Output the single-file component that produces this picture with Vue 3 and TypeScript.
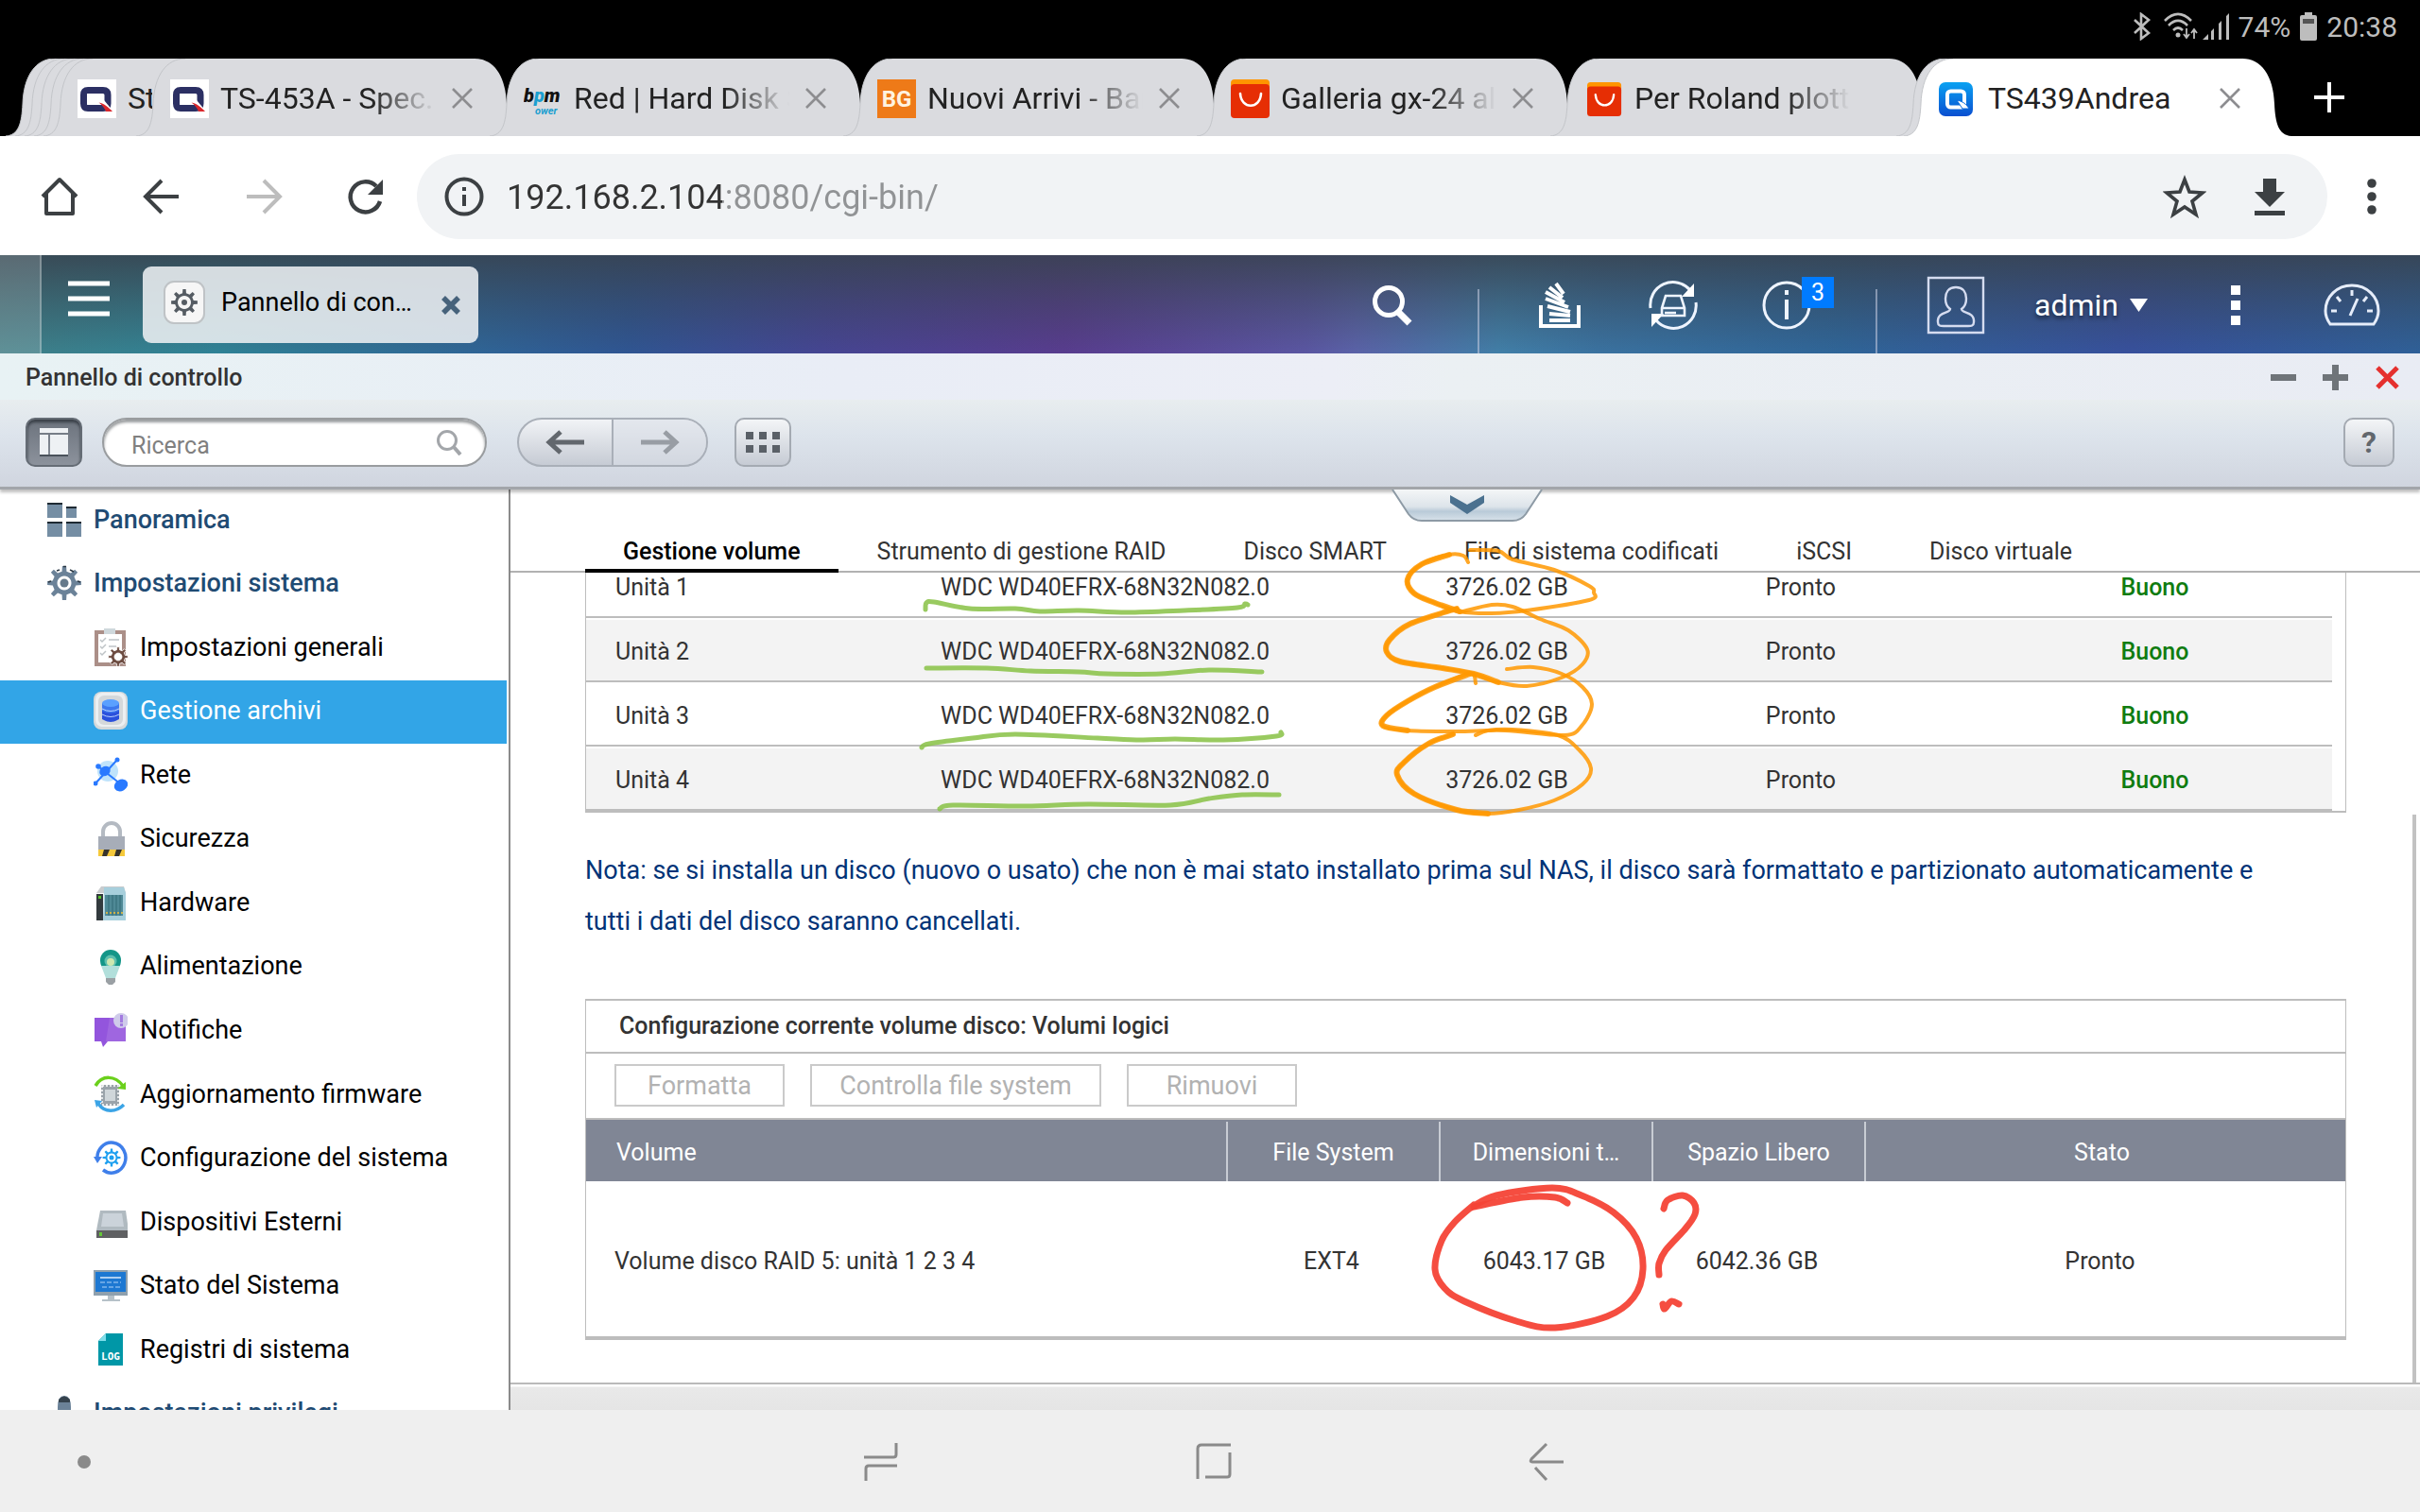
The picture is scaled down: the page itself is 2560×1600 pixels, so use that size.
<script setup lang="ts">
type Point = [number, number]

interface BrowserTab {
  title: string
  icon: string
  kind: 'stack' | 'peek' | 'full' | 'sliver'
  active?: boolean
  closable?: boolean
}

interface MenuItem {
  label: string
  icon: string
  level: 1 | 2
  selected?: boolean
}

/* Outline of a cog wheel with evenly spaced teeth. */
function gear(cx: number, cy: number, outer: number, inner: number, teeth: number): string {
  const step = (Math.PI * 2) / teeth
  const at = (r: number, a: number) =>
    `${(cx + r * Math.sin(a)).toFixed(2)} ${(cy - r * Math.cos(a)).toFixed(2)}`
  const parts: string[] = []
  for (let i = 0; i < teeth; i++) {
    const a = i * step
    parts.push(
      at(inner, a - step * 0.25),
      at(outer, a - step * 0.15),
      at(outer, a + step * 0.15),
      at(inner, a + step * 0.25),
    )
  }
  return `M${parts.join('L')}Z`
}

/* Smooth freehand line through the given points. */
function stroke(points: Point[]): string {
  let d = `M${points[0][0]} ${points[0][1]}`
  for (let i = 0; i < points.length - 1; i++) {
    const p0 = points[Math.max(0, i - 1)]
    const p1 = points[i]
    const p2 = points[i + 1]
    const p3 = points[Math.min(points.length - 1, i + 2)]
    const c1 = [p1[0] + (p2[0] - p0[0]) / 6, p1[1] + (p2[1] - p0[1]) / 6]
    const c2 = [p2[0] - (p3[0] - p1[0]) / 6, p2[1] - (p3[1] - p1[1]) / 6]
    d += `C${c1[0].toFixed(1)} ${c1[1].toFixed(1)} ${c2[0].toFixed(1)} ${c2[1].toFixed(1)} ${p2[0]} ${p2[1]}`
  }
  return d
}

const qnap =
  '<path fill="#fff" d="M0 0h41v41H0z"/><path fill="none" stroke="#2b2f63" stroke-width="7" d="M11 11.500h16q5 0 5 5v9q0 5-5 5H11q-4.500 0-4.500-5v-9q0-5 4.500-5z"/><path fill="#fff" d="M22 22l6 0 10 12-3 0z"/><path fill="#d9262c" d="M22.500 24.500c6 1 10 5 14.500 9.500h-7c-1-3-4-7-7.500-9.500z"/>'
const ali =
  '<path fill="#ff9500" d="M4 0h33q4 0 4 4v10H0V4q0-4 4-4z"/><path fill="#e62e04" d="M4 5h33q4 0 4 4v28q0 4-4 4H4q-4 0-4-4V9q0-4 4-4z"/><path fill="none" stroke="#fff" stroke-width="2.600" stroke-linecap="round" d="M10 15c1 17 21 17 22 0"/>'
const favicons: Record<string, string> = {
  qnap,
  ali,
  aliSmall: `<g transform="translate(3 3) scale(.88)">${ali}</g>`,
  bpm: '<text x="0" y="24" font-family="Roboto, sans-serif" font-size="20" font-weight="900" font-style="italic" fill="#111">b<tspan fill="#1b9fd0">p</tspan>m</text><text x="12" y="37" font-family="Roboto, sans-serif" font-size="11" font-weight="700" font-style="italic" fill="#1b9fd0">ower</text>',
  bg: '<path fill="#ee7a18" d="M0 0h41v41H0z"/><text x="20.500" y="29" text-anchor="middle" font-family="Roboto, sans-serif" font-size="24" font-weight="700" fill="#fff3e0">BG</text>',
  qts: '<defs><linearGradient id="qts" x2="0" y2="1"><stop stop-color="#0aa2f2"/><stop offset="1" stop-color="#0a4fd0"/></linearGradient></defs><rect x="1" y="3" width="36" height="36" rx="7" fill="url(#qts)"/><rect x="10" y="12.500" width="18" height="17" rx="3.500" fill="none" stroke="#fff" stroke-width="4"/><path fill="#fff" stroke="#0b6bdc" d="M20 22c6 1 10 4 13 9h-7z"/>',
}

const browserTabs: BrowserTab[] = [
  { title: '', icon: '', kind: 'stack' },
  { title: '', icon: '', kind: 'stack' },
  { title: '', icon: '', kind: 'stack' },
  { title: '', icon: '', kind: 'stack' },
  { title: 'St', icon: 'qnap', kind: 'peek' },
  { title: 'TS-453A - Spec.', icon: 'qnap', kind: 'full', closable: true },
  { title: 'Red | Hard Disk S', icon: 'bpm', kind: 'full', closable: true },
  { title: 'Nuovi Arrivi - Ban', icon: 'bg', kind: 'full', closable: true },
  { title: 'Galleria gx-24 all', icon: 'ali', kind: 'full', closable: true },
  { title: 'Per Roland plotter', icon: 'aliSmall', kind: 'full' },
  { title: '', icon: '', kind: 'sliver' },
  { title: 'TS439Andrea', icon: 'qts', kind: 'full', active: true, closable: true },
]

const menuIcons: Record<string, string> = {
  overview:
    '<path fill="#758ea4" d="M0 2h16v16H0zM20 6h11v12H20zM0 22h16v16H0zM20 22h16v16H20z"/><path fill="#1e2a33" d="M0 2h16v2H0zM20 6h11v2H20zM0 22h16v2H0zM20 22h16v2H20z"/>',
  system: `<path fill="#6b8298" fill-rule="evenodd" d="${gear(18, 20, 18, 12.5, 8)}M18 12.500a7.500 7.500 0 1 0 .01 0z"/><path fill="none" stroke="#2a3742" stroke-width="1.500" d="M10 7l3-1M17 2.500h3M24 6l4 2M1 19l3-1M32 18l3 1"/><circle cx="18" cy="20" r="4.500" fill="#65798a"/>`,
  general: `<path fill="#ab8f88" d="M1 2h33v38H1z"/><path fill="#fff" d="M5 6h25v30H5z"/><path fill="#cfd8dc" d="M11 0h12v6H11z"/><path fill="none" stroke="#bfc4c7" stroke-width="1.500" d="M7 12l2 2 4-4M7 19l2 2 4-4M7 26l2 2 4-4M16 12h11M16 19h8"/><path fill="#6d4c41" stroke="#fff" stroke-width=".8" fill-rule="evenodd" d="${gear(26, 30, 10.5, 7.5, 8)}M26 26a4 4 0 1 0 .01 0z"/>`,
  storage:
    '<rect width="36" height="40" rx="8" fill="#d5d9db"/><rect x="2" y="1" width="32" height="36" rx="7" fill="#eceff1"/><rect x="5" y="4" width="26" height="31" rx="6" fill="#d4d8da"/><path fill="#2b50dc" d="M9 12h18v17q-9 6-18 0z"/><path fill="#3d78ee" d="M9 12h18v8q-9 5-18 0z"/><ellipse cx="18" cy="12" rx="9" ry="4" fill="#5aa0ff"/><path fill="none" stroke="#b9d0ff" d="M9 18q9 5 18 0M9 24q9 5 18 0"/>',
  network:
    '<circle cx="15" cy="16" r="11" fill="#bfe3fb"/><path fill="none" stroke="#2979ff" stroke-width="2" d="M1 30L25 4M5 11l24 19"/><ellipse cx="12" cy="16" rx="6" ry="5" transform="rotate(-35 12 16)" fill="#2979ff"/><circle cx="25" cy="4" r="2.500" fill="#2979ff"/><circle cx="5" cy="11" r="2.800" fill="#2979ff"/><circle cx="2" cy="29" r="2.500" fill="#2979ff"/><ellipse cx="29" cy="31" rx="7.500" ry="6" transform="rotate(-30 29 31)" fill="#2979ff"/>',
  security:
    '<path fill="none" stroke="#b4bac2" stroke-width="4" d="M10 20v-7a9 9 0 0 1 18 0v7"/><path fill="#a7adb8" d="M5 18h28v15H5z"/><path fill="#f5c93b" d="M5 32h28v7H5z"/><path fill="#37332b" d="M11 32h6l-3 7H9zM24 32h6l-3 7h-5z"/>',
  hardware:
    '<path fill="#c9ccce" d="M3 10l5-7h24l2 7z"/><path fill="#a7cfdc" d="M11 4h21l2 6v29H10z"/><path fill="#333a3e" d="M3 11h7v28H3z"/><path fill="#4f8996" d="M12 12h19v22H12z"/><path stroke="#336b77" d="M16 12v22M20 12v22M24 12v22M28 12v22"/><path stroke="#cdb24b" stroke-width="2" stroke-dasharray="2 2" d="M13 31h18"/><path fill="#57c12c" d="M5 13h3v3H5z"/>',
  power:
    '<path fill="#149688" d="M7 14a11 11 0 0 1 22 0q0 5-2 7H9q-2-2-2-7z"/><circle cx="18" cy="15" r="6.500" fill="#5fbfae"/><circle cx="18" cy="16" r="4" fill="#cde8b0"/><path fill="#b2dfdb" d="M8 20h20l-5 13H13z"/><path fill="#9aa0a4" d="M13 33h10v4l-3 3h-4l-3-3z"/>',
  notify:
    '<path fill="#9355dd" d="M1 7h33v25H15l-5 6-2-6H1z"/><path fill="#9f66e0" d="M17 7h17v25H13z"/><circle cx="29" cy="10" r="8" fill="#cfcbea"/><path fill="#a27ae0" d="M28 4h3v8h-3zM28 13h3v3h-3z"/>',
  firmware:
    '<path fill="#9aa3aa" d="M8 10h19v22H8z"/><path fill="none" stroke="#fff" stroke-width="1.500" stroke-dasharray="2 2" d="M9 11h17v20H9z"/><path fill="#cfd6da" d="M12 15h11v12H12z"/><path fill="none" stroke="#6bd01c" stroke-width="3.500" d="M2 11C9-1 23 0 31 11"/><path fill="#6bd01c" d="M34 7v8l-9-1z"/><path fill="none" stroke="#3ba4e6" stroke-width="3.500" d="M5 30c7 10 19 9 27 1"/><path fill="#3ba4e6" d="M1 26l8 1-6 7z"/>',
  config: `<path fill="none" stroke="#3f7fea" stroke-width="3.500" d="M4 22A15 16 0 1 1 10 33"/><path fill="#3f7fea" d="M0 19h9l-5 7z"/><path fill="#1ea0f0" fill-rule="evenodd" d="${gear(19, 20, 9.5, 6.5, 8)}M19 15.500a4.500 4.500 0 1 0 .01 0z"/><circle cx="19" cy="20" r="2.500" fill="#1ea0f0"/>`,
  devices:
    '<path fill="#b0bac0" d="M7 8h27l3 21H3z"/><path fill="#cbd3da" d="M10 11h20l2 14H8z"/><path fill="#5f6062" d="M3 29h34v8H3z"/><path fill="#65c638" d="M6 31h3v4H6z"/>',
  status:
    '<path fill="#8fa0ad" d="M0 4h36v27H0z"/><path fill="#1d78d2" d="M2 6h32v21H2z"/><path stroke="#dcecfb" stroke-width="1.500" d="M7 12h22"/><path stroke="#7fb4ec" stroke-width="1.500" d="M7 17h22M9 22h19" stroke-dasharray="5 2"/><path fill="#b6c1c8" d="M15 31h7v4h6v2H9v-2h6z"/>',
  log: '<path fill="#0097a7" d="M13 3h18v34H5V11z"/><path fill="#80deea" d="M13 3v8H5z"/><text x="18" y="31" text-anchor="middle" font-family="DejaVu Sans Mono, monospace" font-weight="700" font-size="11" fill="#fff">LOG</text>',
  privilege:
    '<path fill="#6b8298" d="M11 14q0-12 7-12t7 12v12H11z"/><path fill="#35424d" d="M12 6q6-7 12 0v3H12z"/>',
}

const menu: MenuItem[] = [
  { label: 'Panoramica', icon: 'overview', level: 1 },
  { label: 'Impostazioni sistema', icon: 'system', level: 1 },
  { label: 'Impostazioni generali', icon: 'general', level: 2 },
  { label: 'Gestione archivi', icon: 'storage', level: 2, selected: true },
  { label: 'Rete', icon: 'network', level: 2 },
  { label: 'Sicurezza', icon: 'security', level: 2 },
  { label: 'Hardware', icon: 'hardware', level: 2 },
  { label: 'Alimentazione', icon: 'power', level: 2 },
  { label: 'Notifiche', icon: 'notify', level: 2 },
  { label: 'Aggiornamento firmware', icon: 'firmware', level: 2 },
  { label: 'Configurazione del sistema', icon: 'config', level: 2 },
  { label: 'Dispositivi Esterni', icon: 'devices', level: 2 },
  { label: 'Stato del Sistema', icon: 'status', level: 2 },
  { label: 'Registri di sistema', icon: 'log', level: 2 },
  { label: 'Impostazioni privilegi', icon: 'privilege', level: 1 },
]

const sections = [
  'Gestione volume',
  'Strumento di gestione RAID',
  'Disco SMART',
  'File di sistema codificati',
  'iSCSI',
  'Disco virtuale',
]

const disks = [1, 2, 3, 4].map((n) => ({
  name: `Unità ${n}`,
  model: 'WDC WD40EFRX-68N32N082.0',
  size: '3726.02 GB',
  state: 'Pronto',
  health: 'Buono',
}))

const green: Point[][] = [
  [[979, 645], [980, 638], [988, 637], [1026, 644], [1074, 644], [1100, 647], [1141, 646], [1192, 648], [1253, 646], [1309, 643], [1317, 639], [1320, 640]],
  [[980, 707], [1044, 707], [1090, 710], [1141, 711], [1171, 713], [1228, 713], [1279, 709], [1335, 711]],
  [[975, 791], [983, 787], [1029, 781], [1074, 777], [1161, 781], [1207, 783], [1243, 782], [1294, 783], [1350, 779], [1355, 775]],
  [[994, 856], [1008, 852], [1085, 853], [1151, 851], [1238, 852], [1279, 845], [1314, 841], [1353, 841]],
]

const orange: Point[][] = [
  [[1553, 595], [1548, 588], [1533, 587], [1504, 597], [1489, 613], [1496, 628], [1518, 638], [1544, 647], [1578, 649], [1615, 646], [1681, 635], [1686, 627], [1681, 620], [1644, 603], [1600, 592], [1585, 583], [1555, 582]],
  [[1544, 648], [1578, 640], [1600, 642], [1629, 655], [1659, 667], [1679, 687], [1674, 703], [1652, 717], [1615, 726], [1585, 722], [1559, 713], [1526, 707], [1481, 700], [1467, 690], [1470, 677], [1492, 660], [1541, 644]],
  [[1594, 708], [1622, 706], [1652, 713], [1674, 727], [1684, 745], [1674, 767], [1655, 778], [1592, 773], [1541, 774], [1489, 773], [1463, 768], [1467, 757], [1489, 742], [1518, 727], [1555, 713], [1561, 723]],
  [[1561, 778], [1574, 773], [1600, 772], [1648, 778], [1670, 793], [1683, 813], [1674, 830], [1644, 847], [1607, 857], [1574, 861], [1541, 857], [1496, 840], [1478, 820], [1485, 807], [1511, 787], [1537, 777]],
]

/* The left half of each orange loop, where the pen was pressed harder. */
const orangeHeavy: Point[][] = [
  orange[0].slice(2, 8),
  orange[1].slice(9),
  orange[2].slice(9, 15),
  orange[3].slice(9),
]

const red: Point[][] = [
  [[1658, 1273], [1645, 1267], [1611, 1267], [1559, 1277]],
  [[1556, 1278], [1583, 1265], [1642, 1257], [1673, 1265], [1707, 1283], [1731, 1310], [1738, 1343], [1728, 1373], [1700, 1393], [1645, 1405], [1604, 1398], [1549, 1377], [1528, 1363], [1518, 1343], [1525, 1313], [1539, 1293], [1559, 1275]],
  [[1760, 1279], [1764, 1270], [1780, 1265], [1792, 1273], [1793, 1285], [1783, 1300], [1762, 1323], [1755, 1337], [1755, 1349]],
  [[1759, 1380], [1761, 1385], [1768, 1377], [1776, 1380]],
]
</script>

<template>
  <div class="screen">
    <div class="status">
      <svg width="20" height="30" viewBox="0 0 20 30" fill="none" stroke="#bdbdbd" stroke-width="2.6"><path d="M2 8l15 14-8 6V2l8 6L2 22" /></svg>
      <svg class="wifi" width="38" height="30" viewBox="0 0 38 30" fill="none" stroke="#bdbdbd" stroke-width="2.6">
        <path d="M2 9Q16-5 30 9M6 14q10-10 20 0M11 19q5-5 10 0" /><circle cx="16" cy="24" r="2.500" fill="#bdbdbd" stroke="none" />
        <path stroke-width="1.8" d="M25 17v9M22 23l3 4 3-4M33 28v-9M30 22l3-4 3 4" />
      </svg>
      <svg class="signal" width="30" height="30" viewBox="0 0 30 30" fill="#bdbdbd"><path d="M0 29l6-6v6zM9 20l3-3v12H9zM17 12l3-3v20h-3zM25 4l3-3v28h-3z" /></svg>
      <span>74%</span>
      <svg class="battery" width="18" height="30" viewBox="0 0 18 30"><path fill="#bdbdbd" d="M5 0h8v3h3q2 0 2 2v23q0 2-2 2H2q-2 0-2-2V5q0-2 2-2h3z" /><path fill="#555" d="M3 7h12v5H3z" /></svg>
      <span>20:38</span>
    </div>

    <nav class="tabs" aria-label="Schede">
      <div v-for="(tab, i) in browserTabs" :key="i" class="tab" :class="[tab.kind, { active: tab.active }]">
        <svg class="shape" width="410" height="82" viewBox="0 0 410 82">
          <path class="fill" d="M0 82C14 81 17 68 18 48C19 18 32 0 52 0H358C378 0 391 18 392 48C393 68 396 81 410 82Z" />
          <path class="edge" d="M0 82C14 81 17 68 18 48C19 18 32 0 52 0" />
        </svg>
        <template v-if="tab.icon">
          <svg class="favicon" width="41" height="41" viewBox="0 0 41 41" v-html="favicons[tab.icon]"></svg>
          <a class="tab-title" href="#">{{ tab.title }}</a>
          <button v-if="tab.closable" class="tab-close" aria-label="Chiudi scheda">
            <svg width="24" height="24" viewBox="0 0 24 24"><path d="M2 2l20 20M22 2L2 22" stroke="#8d8d90" stroke-width="2.6" /></svg>
          </button>
        </template>
      </div>
      <button class="new-tab" aria-label="Nuova scheda">
        <svg width="32" height="32" viewBox="0 0 32 32"><path d="M16 0v32M0 16h32" stroke="#fff" stroke-width="4" /></svg>
      </button>
    </nav>

    <div class="browser-bar">
      <button aria-label="Home"><svg width="44" height="44" viewBox="0 0 44 44"><path d="M4 22L22 4l18 18M8 19v21h28V19" fill="none" stroke="#3c4043" stroke-width="4" stroke-linejoin="round" /></svg></button>
      <button aria-label="Indietro"><svg width="44" height="44" viewBox="0 0 44 44"><path d="M22 5L5 22l17 17M5 22h35" fill="none" stroke="#3c4043" stroke-width="4" /></svg></button>
      <button aria-label="Avanti"><svg width="44" height="44" viewBox="0 0 44 44"><path d="M22 5l17 17-17 17M39 22H4" fill="none" stroke="#bdbdbd" stroke-width="4" /></svg></button>
      <button aria-label="Ricarica"><svg width="44" height="44" viewBox="0 0 44 44"><path d="M37 27A16 16 0 1 1 33 11" fill="none" stroke="#3c4043" stroke-width="4.5" /><path fill="#3c4043" d="M40 4v16H24z" /></svg></button>
      <div class="omnibox">
        <svg width="42" height="42" viewBox="0 0 42 42"><circle cx="21" cy="21" r="18.500" fill="none" stroke="#3c4043" stroke-width="4" /><path fill="#3c4043" d="M19 19h4v12h-4zM19 11h4v4h-4z" /></svg>
        <input class="url" type="text" value="192.168.2.104:8080/cgi-bin/" aria-label="Indirizzo" />
        <button aria-label="Preferiti"><svg width="46" height="46" viewBox="0 0 46 46"><path d="M23 5l5 13 14 1-11 9 4 14-12-8-12 8 4-14L4 19l14-1z" fill="none" stroke="#3c4043" stroke-width="3.6" /></svg></button>
        <button aria-label="Scarica"><svg width="46" height="46" viewBox="0 0 46 46"><path fill="#3c4043" d="M16 4h14v14h9L23 34 7 18h9zM7 38h32v5H7z" /></svg></button>
      </div>
      <button class="more" aria-label="Altro"><svg width="10" height="40" viewBox="0 0 10 40" fill="#3c4043"><circle cx="5" cy="6" r="4.800" /><circle cx="5" cy="20" r="4.800" /><circle cx="5" cy="34" r="4.800" /></svg></button>
    </div>

    <header class="desk">
      <div class="desk-edge"></div>
      <button class="burger" aria-label="Menu principale"><svg width="44" height="38" viewBox="0 0 44 38"><path d="M0 3h44M0 19h44M0 35h44" stroke="#fff" stroke-width="5" /></svg></button>
      <div class="task">
        <svg width="44" height="46" viewBox="0 0 44 46">
          <rect x="1" y="1" width="42" height="44" rx="10" fill="#f6f6f6" stroke="#bfc3c6" stroke-width="2" />
          <path :d="gear(22, 23, 14, 10, 8) + 'M22 16a7 7 0 1 0 .01 0z'" fill="#555c63" fill-rule="evenodd" /><circle cx="22" cy="23" r="3" fill="#555c63" />
        </svg>
        <a href="#">Pannello di con…</a>
        <button aria-label="Chiudi"><svg width="22" height="22" viewBox="0 0 22 22"><path d="M3 3l16 16M19 3L3 19" stroke="#46627b" stroke-width="5.5" /></svg></button>
      </div>
      <div class="desk-right">
        <button class="search" aria-label="Cerca"><svg width="44" height="46" viewBox="0 0 44 46" fill="none" stroke="#fff"><circle cx="19" cy="19" r="14.500" stroke-width="5" /><path d="M29 30l12 12" stroke-width="7" /></svg></button>
        <i class="rule"></i>
        <div class="trio">
          <button aria-label="Attività"><svg width="46" height="50" viewBox="0 0 46 50" fill="none" stroke="#fff" stroke-width="4"><path d="M3 25v22h40V25" /><path d="M12 41h22M12 34l22 2M10 26l24 6M8 18l24 9M8 11l20 11M12 6l14 11M19 2l8 11" stroke-width="4" /></svg></button>
          <button aria-label="Dispositivi"><svg width="54" height="54" viewBox="0 0 54 54" fill="none" stroke="#eef4ff" stroke-width="3"><path d="M3 30A24 24 0 0 1 45 11M51 24A24 24 0 0 1 9 43" /><path d="M49 4v14H36zM4 50V36h13z" fill="#fff" stroke="none" /><path d="M19 17h16l4 13v8H15v-8zM15 30h24M18 35h12" stroke-width="2.6" /></svg></button>
          <button class="info" aria-label="Notifiche"><svg width="52" height="52" viewBox="0 0 52 52" fill="none" stroke="#eef4ff" stroke-width="3"><circle cx="26" cy="26" r="24" /><path d="M26 20v21M26 10v5" stroke-width="4" /></svg><span class="badge">3</span></button>
        </div>
        <i class="rule"></i>
        <button class="user" aria-label="Utente"><svg width="62" height="62" viewBox="0 0 62 62" fill="none" stroke="#d5dcf0" stroke-width="2.4"><path d="M2 2h58v58H2z" /><path d="M31 12c-8 0-11 6-11 12 0 5 2 9 5 11 0 5-14 2-13 14 0 4 3 4 6 4h26c3 0 6 0 6-4 1-12-13-9-13-14 3-2 5-6 5-11 0-6-3-12-11-12z" /></svg></button>
        <button class="admin">admin <svg width="19" height="14" viewBox="0 0 19 14"><path fill="#fff" d="M0 0h19l-9.500 14z" /></svg></button>
        <button class="dots" aria-label="Altro"><svg width="10" height="42" viewBox="0 0 10 42" fill="#fff"><path d="M0 0h10v10H0zM0 16h10v10H0zM0 32h10v10H0z" /></svg></button>
        <button aria-label="Dashboard"><svg width="60" height="46" viewBox="0 0 60 46" fill="none" stroke="#e6edfa" stroke-width="3"><path d="M7 43Q2 36 2 29C2 14 14 2 30 2s28 12 28 27q0 7-5 14z" /><path d="M30 7v6M14 14l4 5M8 29h6M46 29h6M46 14l-4 5M28 34l8-18" /></svg></button>
      </div>
    </header>

    <div class="titlebar">
      <h1>Pannello di controllo</h1>
      <div class="window-actions">
        <button aria-label="Riduci"><svg width="27" height="27" viewBox="0 0 27 27"><path fill="#6f7479" d="M0 10h27v7H0z" /></svg></button>
        <button aria-label="Ingrandisci"><svg width="27" height="27" viewBox="0 0 27 27"><path fill="#6f7479" d="M0 10h10V0h7v10h10v7H17v10h-7V17H0z" /></svg></button>
        <button aria-label="Chiudi finestra"><svg width="27" height="27" viewBox="0 0 27 27"><path d="M3 3l21 21M24 3L3 24" stroke="#e5302e" stroke-width="5" /></svg></button>
      </div>
    </div>

    <div class="toolbar">
      <button class="tool dark" aria-label="Riquadro"><svg width="32" height="32" viewBox="0 0 32 32"><path fill="#eef1f4" d="M1 1h30v5H1zM1 8h9v21H1zM12 8h19v21H12z" /><path fill="#4a525b" d="M1 29h30v2H1z" /></svg></button>
      <label class="find">
        <input type="search" placeholder="Ricerca" aria-label="Ricerca" />
        <svg width="28" height="28" viewBox="0 0 28 28" fill="none" stroke="#a3a6aa"><circle cx="12" cy="12" r="9.500" stroke-width="3" /><path d="M19 19l7 8" stroke-width="4" /></svg>
      </label>
      <div class="history">
        <button aria-label="Precedente"><svg width="42" height="26" viewBox="0 0 42 26"><path d="M16 2L4 13l12 11M4 13h37" fill="none" stroke="#62676d" stroke-width="5" /></svg></button>
        <button aria-label="Successivo"><svg width="42" height="26" viewBox="0 0 42 26"><path d="M26 2l12 11-12 11M38 13H1" fill="none" stroke="#989da4" stroke-width="5" /></svg></button>
      </div>
      <button class="tool" aria-label="Griglia"><svg width="36" height="22" viewBox="0 0 36 22" fill="#5a6067"><path d="M0 0h8v8H0zM14 0h8v8h-8zM28 0h8v8h-8zM0 14h8v8H0zM14 14h8v8h-8zM28 14h8v8h-8z" /></svg></button>
      <button class="tool help">?</button>
    </div>

    <div class="body">
      <aside>
        <ul>
          <li v-for="item in menu" :key="item.label" :class="['level' + item.level, { selected: item.selected }]">
            <a href="#"><svg width="36" height="40" viewBox="0 0 36 40" v-html="menuIcons[item.icon]"></svg>{{ item.label }}</a>
          </li>
        </ul>
      </aside>

      <main>
        <button class="pull" aria-label="Mostra dettagli">
          <svg width="160" height="36" viewBox="0 0 160 36">
            <defs><linearGradient id="pull" x2="0" y2="1"><stop stop-color="#f4f6f7" /><stop offset=".55" stop-color="#dde4ea" /><stop offset=".7" stop-color="#b9cad8" /><stop offset="1" stop-color="#d8e2ea" /></linearGradient></defs>
            <path d="M1 0L18 26q5 7 14 7h96q9 0 14-7L159 0" fill="url(#pull)" stroke="#8d9aa5" stroke-width="2" />
            <path d="M62 6l18 10 18-10v8L80 26 62 14z" fill="#4b718f" />
          </svg>
        </button>
        <nav class="sections" aria-label="Sezioni">
          <a v-for="(s, i) in sections" :key="s" href="#" :class="{ current: i === 0 }">{{ s }}</a>
        </nav>

        <div class="scroll">
          <div class="box disk-box">
            <table class="disks">
              <colgroup><col class="c-name" /><col class="c-model" /><col class="c-name" /><col class="c-state" /><col /></colgroup>
              <tbody>
                <tr v-for="d in disks" :key="d.name">
                  <td>{{ d.name }}</td>
                  <td>{{ d.model }}</td>
                  <td>{{ d.size }}</td>
                  <td>{{ d.state }}</td>
                  <td class="good">{{ d.health }}</td>
                </tr>
              </tbody>
            </table>
          </div>

          <p class="note">
            Nota: se si installa un disco (nuovo o usato) che non è mai stato installato prima sul NAS, il disco sarà formattato e partizionato automaticamente e<br />
            tutti i dati del disco saranno cancellati.
          </p>

          <section class="box">
            <h2>Configurazione corrente volume disco: Volumi logici</h2>
            <div class="actions">
              <button>Formatta</button>
              <button class="wide">Controlla file system</button>
              <button>Rimuovi</button>
            </div>
            <table class="volumes">
              <colgroup><col class="v-name" /><col class="v-cell" /><col class="v-cell" /><col class="v-cell" /><col /></colgroup>
              <thead>
                <tr><th>Volume</th><th>File System</th><th>Dimensioni t…</th><th>Spazio Libero</th><th>Stato</th></tr>
              </thead>
              <tbody>
                <tr><td>Volume disco RAID 5: unità 1 2 3 4</td><td>EXT4</td><td>6043.17 GB</td><td>6042.36 GB</td><td>Pronto</td></tr>
              </tbody>
            </table>
          </section>
          <div class="thumb"></div>
        </div>
        <footer></footer>

        <svg class="marks" viewBox="540 518 2020 974" preserveAspectRatio="xMinYMin meet" fill="none" stroke-linecap="round" stroke-linejoin="round">
          <g stroke="#8bc34a" stroke-opacity=".88" stroke-width="5"><path v-for="(m, i) in green" :key="i" :d="stroke(m)" /></g>
          <g stroke="#ff9800" stroke-opacity=".85" stroke-width="4"><path v-for="(m, i) in orange" :key="i" :d="stroke(m)" /></g>
          <g stroke="#ff9800" stroke-opacity=".85" stroke-width="6"><path v-for="(m, i) in orangeHeavy" :key="i" :d="stroke(m)" /></g>
          <g stroke="#f44336" stroke-opacity=".95" stroke-width="7"><path v-for="(m, i) in red" :key="i" :d="stroke(m)" /></g>
        </svg>
      </main>
    </div>

    <nav class="system" aria-label="Navigazione di sistema">
      <span class="pin"></span>
      <div class="keys">
        <button aria-label="Recenti"><svg width="40" height="42" viewBox="0 0 40 42" fill="none" stroke="#8a8a8a" stroke-width="3"><path d="M36 1v12q0 3-3 3H2M4 41V28q0-3 3-3h30" /></svg></button>
        <button aria-label="Home"><svg width="40" height="42" viewBox="0 0 40 42" fill="none" stroke="#8a8a8a" stroke-width="3"><path d="M3 39V7q0-4 4-4h31M11 37h23q3 0 3-3V11" /></svg></button>
        <button aria-label="Indietro"><svg width="40" height="42" viewBox="0 0 40 42" fill="none" stroke="#8a8a8a" stroke-width="3"><path d="M20 2L4 18q-2 3 1 3h33M8 27l12 13" /></svg></button>
      </div>
    </nav>
  </div>
</template>

<style>
body {
  margin: 0;
  background: #fff;
}
</style>

<style scoped>
.screen {
  display: flex;
  flex-direction: column;
  height: 100vh;
  overflow: hidden;
  font-family: Roboto, 'Liberation Sans', sans-serif;
  font-size: 25px;
  color: #333;
  background: #fff;
}
button {
  display: flex;
  align-items: center;
  justify-content: center;
  padding: 0;
  border: 0;
  background: none;
  font: inherit;
  color: inherit;
}
a {
  color: inherit;
  text-decoration: none;
}
svg {
  display: block;
  flex: none;
}

.status {
  flex: none;
  display: flex;
  align-items: center;
  justify-content: flex-end;
  height: 56px;
  padding: 0 24px 6px 0;
  background: #000;
  color: #bdbdbd;
  font-size: 30px;
}
.wifi {
  margin-left: 12px;
}
.signal {
  margin: 0 8px 0 4px;
}
.battery {
  margin: 0 10px;
}

.tabs {
  flex: none;
  display: flex;
  height: 82px;
  padding-left: 6px;
  background: #000;
}
.tab {
  position: relative;
  flex: none;
  display: flex;
  align-items: center;
  box-sizing: border-box;
  width: 374px;
  padding: 2px 0 0 36px;
}
.tab.stack {
  width: 10px;
  padding: 0;
}
.tab.peek {
  width: 98px;
}
.tab.sliver {
  width: 8px;
  margin-left: -8px;
  padding: 0;
}
.shape {
  position: absolute;
  left: 0;
  top: 0;
}
.fill {
  fill: #dadbdf;
}
.active .fill {
  fill: #fff;
}
.edge {
  fill: none;
  stroke: #c3c5c9;
  stroke-width: 1;
}
.favicon,
.tab-title,
.tab-close {
  position: relative;
}
.tab-title {
  flex: none;
  width: 228px;
  margin-left: 12px;
  overflow: hidden;
  white-space: nowrap;
  font-size: 32px;
  color: #222;
  mask-image: linear-gradient(90deg, #000 70%, transparent);
}
.peek .tab-title {
  width: 26px;
  mask-image: none;
}
.active .tab-title {
  mask-image: none;
}
.tab-close {
  margin-left: 16px;
}
.new-tab {
  margin-left: 60px;
}

.browser-bar {
  flex: none;
  display: flex;
  align-items: center;
  height: 126px;
  padding: 2px 46px 0 41px;
  box-sizing: border-box;
  gap: 64px;
}
.omnibox {
  flex: 1;
  display: flex;
  align-items: center;
  box-sizing: border-box;
  height: 90px;
  margin: 0 -22px 0 -32px;
  padding: 0 38px 0 29px;
  border-radius: 45px;
  background: #f1f3f5;
}
.url {
  flex: 1;
  min-width: 0;
  margin-left: 24px;
  padding: 2px 0 0;
  border: 0;
  font: inherit;
  font-size: 36px;
  color: transparent;
  background: linear-gradient(90deg, #333 228px, #919395 228px);
  background-clip: text;
}
.omnibox button {
  margin-left: 44px;
}

.desk {
  flex: none;
  display: flex;
  align-items: center;
  height: 104px;
  background:
    linear-gradient(rgba(56, 66, 78, 0.85), rgba(56, 66, 78, 0.45) 45%, transparent),
    linear-gradient(90deg, #3f7f88 0%, #2f8296 9%, #2f6496 20%, #2f5592 26%, #454592 34%, #583c8e 44%, #5a56a2 54%, #5a62a8 56%, #417fa8 62%, #3a72a0 66%, #2f6598 76%, #37509c 88%, #2f6098 100%);
}
.desk-edge {
  width: 42px;
  height: 100%;
  border-right: 2px solid rgba(255, 255, 255, 0.25);
  background: rgba(190, 200, 200, 0.25);
}
.burger {
  margin: 0 35px 12px 28px;
}
.task {
  display: flex;
  align-items: center;
  box-sizing: border-box;
  width: 355px;
  height: 81px;
  padding: 0 18px 4px 22px;
  margin-right: auto;
  border-radius: 9px;
  background: rgba(240, 242, 244, 0.86);
  font-size: 27px;
  color: #000;
}
.task a {
  flex: 1;
  margin-left: 17px;
}
.task button {
  margin-top: 6px;
}
.desk-right {
  display: flex;
  align-items: center;
  box-sizing: border-box;
  height: 100%;
  padding: 2px 42px 0 0;
}
.search {
  width: 182px;
}
.rule {
  align-self: flex-end;
  width: 2px;
  height: 68px;
  background: rgba(200, 205, 225, 0.55);
}
.trio {
  display: grid;
  grid-template-columns: repeat(3, 120px);
  padding: 0 34px 0 25px;
}
.info {
  position: relative;
}
.badge {
  position: absolute;
  top: -3px;
  right: 10px;
  width: 34px;
  line-height: 33px;
  background: #007bff;
  color: #fff;
  text-align: center;
}
.user {
  width: 166px;
}
.admin {
  justify-content: space-between;
  width: 120px;
  font-size: 32px;
  color: #fff;
  text-shadow: 0 3px 4px rgba(0, 0, 0, 0.5);
}
.dots {
  width: 186px;
}

.titlebar {
  flex: none;
  display: flex;
  align-items: center;
  justify-content: space-between;
  box-sizing: border-box;
  height: 49px;
  padding: 2px 21px 0 27px;
  background: linear-gradient(90deg, #e8f2f4, #e9edf6 35%, #eceef6 55%, #ebf0f3 60%, #e9ecf4);
}
h1 {
  margin: 0;
  font-size: 25px;
  font-weight: 500;
}
.window-actions {
  display: flex;
  gap: 28px;
}

.toolbar {
  flex: none;
  display: flex;
  align-items: center;
  box-sizing: border-box;
  height: 95px;
  padding: 0 27px 2px;
  border-bottom: 3px solid #a2a5aa;
  background: linear-gradient(#e8edef, #dde4ec 40%, #d0d5df);
  box-shadow: 0 3px 3px rgba(0, 0, 0, 0.25);
  position: relative;
}
.tool {
  box-sizing: border-box;
  width: 60px;
  height: 52px;
  border: 2px solid #a4aab2;
  border-radius: 10px;
  background: linear-gradient(#f3f5f7, #c6cbd4);
}
.tool.dark {
  border-color: #656c75;
  background: linear-gradient(#6c737d, #8c929c);
  box-shadow: inset 0 3px 3px #3b4149;
}
.tool.help {
  width: 54px;
  margin-left: auto;
  font-size: 32px;
  font-weight: 700;
  color: #62676d;
}
.find {
  display: flex;
  align-items: center;
  box-sizing: border-box;
  width: 407px;
  height: 52px;
  margin: 0 32px 0 21px;
  padding: 0 24px 0 29px;
  border: 2px solid #999c9f;
  border-radius: 26px;
  background: #fff;
  box-shadow: inset 0 3px 3px #9a9d9f;
}
.find input {
  flex: 1;
  min-width: 0;
  padding: 6px 0 0;
  border: 0;
  background: none;
  font: inherit;
}
.find input::placeholder {
  color: #808080;
}
.history {
  display: flex;
  box-sizing: border-box;
  width: 202px;
  height: 52px;
  margin-right: 28px;
  border: 2px solid #a9afb8;
  border-radius: 26px;
  overflow: hidden;
  background: linear-gradient(#f1f3f6, #c6cbd4);
}
.history button {
  flex: 1;
}
.history button + button {
  border-left: 2px solid #a9afb8;
  background: rgba(218, 223, 231, 0.6);
}

.body {
  flex: 1;
  display: flex;
  min-height: 0;
}
aside {
  flex: none;
  box-sizing: border-box;
  width: 540px;
  padding-right: 2px;
  border-right: 2px solid #8b8b8b;
  overflow: hidden;
}
ul {
  display: grid;
  grid-auto-rows: 1fr;
  height: 1013px;
  margin: -1px 0 0;
  padding: 0;
  list-style: none;
}
li {
  display: flex;
  font-size: 27px;
  color: #000;
}
li a {
  flex: 1;
  display: flex;
  align-items: center;
  gap: 13px;
  padding-bottom: 2px;
}
.level1 {
  padding-left: 50px;
  font-weight: 500;
  color: #1f4b73;
}
.level2 {
  padding-left: 99px;
}
.selected {
  background: #32a5e7;
  color: #fff;
}

main {
  position: relative;
  flex: 1;
  display: flex;
  flex-direction: column;
  min-width: 0;
}
.pull {
  position: absolute;
  top: 0;
  left: 932px;
}
.sections {
  flex: none;
  display: flex;
  box-sizing: border-box;
  height: 88px;
  padding: 43px 0 0 79px;
  border-bottom: 2px solid #b2b2b2;
}
.sections a {
  box-sizing: border-box;
  height: 45px;
  padding: 0 41px;
  line-height: 46px;
}
.sections .current {
  padding: 0 40px;
  border-bottom: 4px solid #000;
  font-weight: 500;
  color: #000;
}
.scroll {
  position: relative;
  flex: 1;
  min-height: 0;
  padding: 0 78px 0 79px;
  overflow: hidden;
}
.box {
  border: 2px solid #bdbdbd;
  border-width: 2px 1px;
}
.disk-box {
  margin-top: -22px;
  padding-right: 14px;
}
table {
  width: 100%;
  border-collapse: separate;
  border-spacing: 0;
  table-layout: fixed;
}
.c-name {
  width: 248px;
}
.c-model {
  width: 602px;
}
.c-state {
  width: 374px;
}
.disks td {
  box-sizing: border-box;
  height: 68px;
  padding: 5px 0 0;
  border-bottom: 2px solid #bdbdbd;
  text-align: center;
}
.disks td:first-child {
  padding-left: 31px;
  text-align: left;
}
.disks tr:nth-child(even) td {
  background: linear-gradient(#fff 2px, #f3f3f3 2px);
}
.disks .good {
  font-weight: 500;
  color: #107c10;
}
.note {
  margin: 34px 0 55px;
  font-size: 27px;
  line-height: 54px;
  color: #003377;
}
h2 {
  margin: 0;
  padding-left: 35px;
  border-bottom: 2px solid #bdbdbd;
  font-size: 25px;
  font-weight: 500;
  line-height: 54px;
}
.actions {
  display: flex;
  gap: 27px;
  padding: 11px 30px 12px;
  border-bottom: 2px solid #bdbdbd;
}
.actions button {
  box-sizing: border-box;
  width: 180px;
  height: 45px;
  border: 2px solid #cacaca;
  font-size: 27px;
  color: #b2b2b2;
}
.actions .wide {
  width: 308px;
}
.v-name {
  width: 677px;
}
.v-cell {
  width: 225px;
}
th {
  box-sizing: border-box;
  height: 65px;
  padding: 3px 0 0 2px;
  background: linear-gradient(#c8ccd4, #c8ccd4) 0 100% / 2px 63px no-repeat #808695;
  font-weight: 400;
  color: #fff;
}
th:first-child {
  padding-left: 32px;
  background: #808695;
  text-align: left;
}
th:last-child {
  padding-right: 8px;
}
.volumes td {
  height: 160px;
  padding: 4px 2px 0 0;
  border-bottom: 2px solid #bdbdbd;
  text-align: center;
}
.volumes td:first-child {
  padding-left: 30px;
  text-align: left;
}
.volumes td:last-child {
  padding-right: 10px;
}
.thumb {
  position: absolute;
  top: 256px;
  right: 4px;
  bottom: 0;
  width: 4px;
  background: #c2c2c2;
}
footer {
  flex: none;
  box-sizing: border-box;
  height: 29px;
  border-top: 2px solid #bababa;
  background: linear-gradient(#fff 2px, #e9e9e9 3px, #e5e5e5);
}
.marks {
  position: absolute;
  inset: 0;
  width: 100%;
  height: 100%;
  pointer-events: none;
}

.system {
  flex: none;
  display: flex;
  align-items: center;
  box-sizing: border-box;
  height: 108px;
  padding-top: 2px;
  background: #efefef;
}
.pin {
  width: 14px;
  height: 14px;
  margin-left: 82px;
  border-radius: 50%;
  background: #8a8a8a;
}
.keys {
  display: flex;
  gap: 312px;
  margin: 0 auto;
  padding-right: 88px;
}
</style>
